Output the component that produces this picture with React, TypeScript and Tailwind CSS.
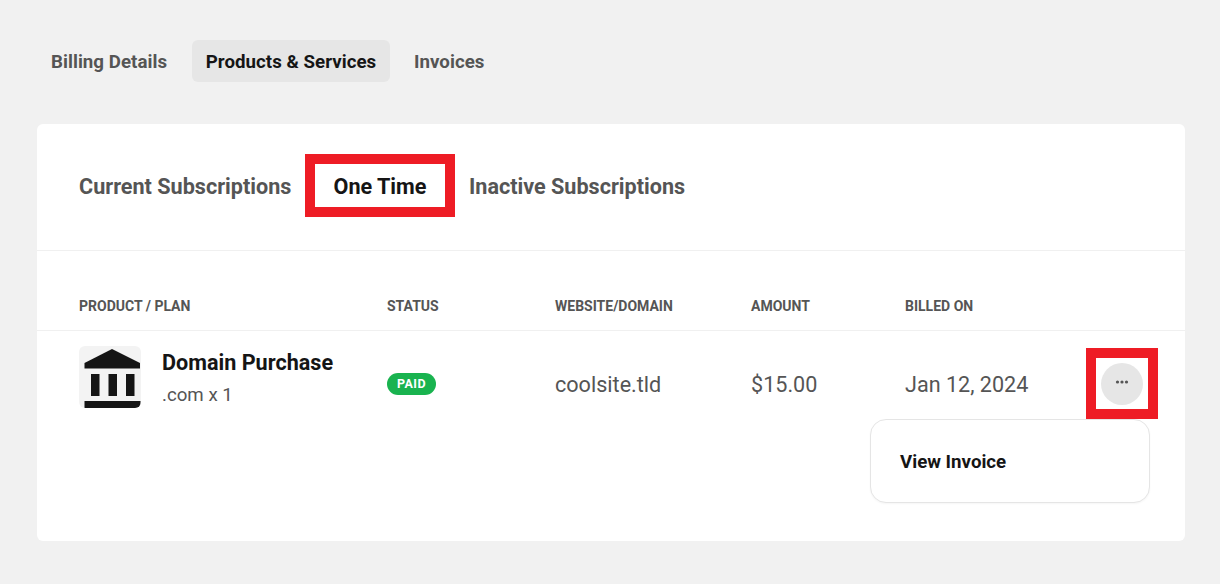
const columnHeads = ["Product / Plan", "Status", "Website/Domain", "Amount", "Billed On"]

function BankIcon() {
  return (
    <div className="h-[62px] w-[62px] overflow-hidden rounded-md bg-[#f3f3f3]">
      <svg viewBox="0 0 62 62" className="h-full w-full" fill="#151515">
        <path d="M33 3 L5.5 17 V22.5 H61 V17 Z" />
        <rect x="12" y="28" width="8.5" height="22" />
        <rect x="29.5" y="28" width="8.5" height="22" />
        <rect x="47" y="28" width="8.5" height="22" />
        <rect x="5.5" y="55" width="56" height="7" />
      </svg>
    </div>
  )
}

export default function App() {
  return (
    <div className="h-[584px] w-[1220px] overflow-hidden bg-[#f1f1f1] pl-[37px] pt-10 font-['Roboto',sans-serif]">
      <div className="flex h-[42px] items-center gap-[10px] text-[18.7px] font-bold tracking-[0.03px]">
        <button className="w-[145px] pl-[14px] pt-[2px] text-left text-[#555]">Billing Details</button>
        <button className="flex h-[42px] w-[198px] items-center justify-center rounded-md bg-[#e6e6e6] pt-[2px] text-[#151515]">Products &amp; Services</button>
        <button className="px-[14px] pt-[2px] text-[#555]">Invoices</button>
      </div>

      <div className="mt-[42px] h-[417px] w-[1148px] rounded-md bg-white">
        <div className="flex h-[127px] items-start border-b border-[#f0f0f0] pl-[42px] pt-[30px] text-[21.6px] font-bold">
          <button className="flex h-[63px] w-[226px] items-center pt-[4px] text-[#555]">Current Subscriptions</button>
          <button className="flex h-[63px] w-[150px] items-center justify-center border-[10px] border-[#ee1c25] pt-[4px] text-[#151515]">One Time</button>
          <button className="ml-[14px] flex h-[63px] items-center pt-[4px] text-[#555]">Inactive Subscriptions</button>
        </div>

        <div className="grid h-[80px] grid-cols-[308px_168px_196px_154px_1fr] items-end border-b border-[#f0f0f0] pb-[16px] pl-[42px] text-[14px] font-bold uppercase leading-4 text-[#555]">
          {columnHeads.map((head) => (
            <div key={head}>{head}</div>
          ))}
        </div>

        <div className="relative grid grid-cols-[308px_168px_196px_154px_1fr] items-start pl-[42px] pt-[15px] text-[21.6px] leading-7 text-[#555]">
          <div className="flex items-start gap-[21px]">
            <BankIcon />
            <div className="pt-[3px]">
              <div className="font-bold leading-7 text-[#151515]">Domain Purchase</div>
              <div className="mt-[6px] text-[18.7px] leading-6">.com x 1</div>
            </div>
          </div>
          <div className="pt-[27px]">
            <span className="block w-[49px] rounded-full bg-[#19b34f] text-center text-[12.5px] font-bold leading-[22px] tracking-[0.4px] text-white">PAID</span>
          </div>
          <div className="pt-[25px]">coolsite.tld</div>
          <div className="pt-[25px]">$15.00</div>
          <div className="pt-[25px]">Jan 12, 2024</div>

          <div className="absolute left-[1049px] top-[17px] flex h-[71px] w-[72px] items-center justify-center border-[10px] border-[#ee1c25] bg-white">
            <button className="flex h-[42px] w-[42px] items-center justify-center rounded-full bg-[#e6e6e6]">
              <svg width="14" height="4" viewBox="0 0 14 4" fill="#555" className="-translate-y-[2px]">
                <circle cx="2.5" cy="2" r="1.6" />
                <circle cx="7" cy="2" r="1.6" />
                <circle cx="11.5" cy="2" r="1.6" />
              </svg>
            </button>
          </div>

          <div className="absolute left-[833px] top-[88px] flex h-[84px] w-[280px] items-center rounded-2xl border border-[#e5e5e5] bg-white pl-[29px] pt-[2px] text-[18.7px] font-bold text-[#151515] shadow-[0_1px_2px_rgba(0,0,0,0.04)]">
            View Invoice
          </div>
        </div>
      </div>
    </div>
  )
}
